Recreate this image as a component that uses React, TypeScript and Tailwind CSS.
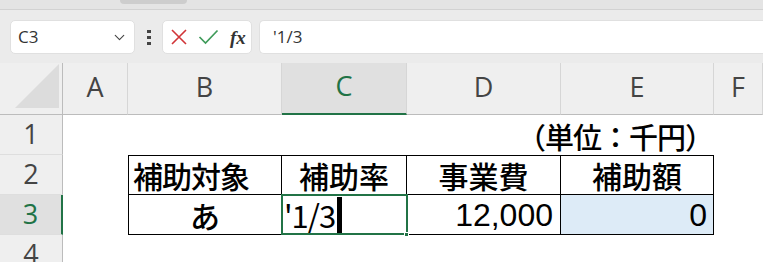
import { ChevronDown } from 'lucide-react'

// Excel-like sheet: formula bar + a small 補助 table, cell C3 in edit mode.

const cols = ['A', 'B', 'C', 'D', 'E', 'F']
const jp = "font-['Noto_Sans_CJK_JP','Noto_Sans_CJK_SC',sans-serif]"
const num = "font-['Liberation_Sans',Arial,sans-serif]"
const head = "font-['Open_Sans',sans-serif]"

function ColHeader({ label }: { label: string }) {
	const active = label === 'C'
	return (
		<div
			className={
				'flex items-center justify-center border-r border-[#d6d6d6] pb-[3px] text-[27px] ' +
				head +
				(active
					? ' border-b-2 border-b-[#217346] bg-[#e0e0e0] text-[#217346]'
					: ' border-b border-b-[#bcbcbc] bg-[#efefef] text-[#444]')
			}
		>
			{label}
		</div>
	)
}

function RowHeader({ n }: { n: number }) {
	const active = n === 3
	return (
		<div
			className={
				'flex items-center justify-center border-b border-b-[#dedede] text-[27px] ' +
				head +
				(active
					? ' border-r-2 border-r-[#217346] bg-[#e0e0e0] text-[#217346]'
					: ' border-r border-r-[#bcbcbc] bg-[#efefef] text-[#444]')
			}
		>
			{n}
		</div>
	)
}

export default function App() {
	return (
		<div className="h-[262px] w-[763px] overflow-hidden bg-white">
			{/* drag strip */}
			<div className="flex h-[10px] border-b border-[#d2d2d2] bg-[#e4e4e4]">
				<div className="ml-[120px] h-[4px] w-[67px] rounded-b-full bg-[#cdcdcd]" />
			</div>

			{/* formula bar */}
			<div className="flex h-[53px] items-start gap-0 bg-[#ebebeb] pt-[10px]">
				<div className="ml-[10px] flex h-[34px] w-[125px] items-center justify-between rounded-[5px] border border-[#e0e0e0] bg-white pl-[7px] pr-[6px]">
					<span className={"text-[17px] text-[#333] " + head}>C3</span>
					<ChevronDown size={17} strokeWidth={1.6} className="text-[#444]" />
				</div>
				<div className="flex h-[34px] w-[27px] flex-col items-center justify-center gap-[3px]">
					<div className="h-[3px] w-[4px] bg-[#444]" />
					<div className="h-[3px] w-[4px] bg-[#444]" />
					<div className="h-[3px] w-[4px] bg-[#444]" />
				</div>
				<div className="flex h-[34px] w-[90px] items-center rounded-[5px] border border-[#e0e0e0] bg-white">
					<svg width="18" height="18" viewBox="0 0 18 18" className="ml-[7px]">
						<path d="M2 2 L16 16 M16 2 L2 16" stroke="#d13438" strokeWidth="1.6" fill="none" />
					</svg>
					<svg width="21" height="16" viewBox="0 0 21 16" className="ml-[10px]">
						<path d="M1.5 8 L7.5 14 L19.5 1.5" stroke="#3f9b5a" strokeWidth="1.7" fill="none" />
					</svg>
					<span className="ml-[11px] font-['Liberation_Serif',serif] text-[19px] font-bold italic leading-none text-[#333]">
						fx
					</span>
				</div>
				<div className="ml-[7px] flex h-[34px] flex-1 items-center rounded-l-[5px] border border-r-0 border-[#e0e0e0] bg-white pl-[13px]">
					<span className={"text-[17px] text-[#333] " + head}>'1/3</span>
				</div>
			</div>

			{/* sheet */}
			<div className="grid grid-cols-[63px_65px_154px_125px_154px_153px_49px] grid-rows-[52px_40px_40px_40px_40px]">
				<div className="relative border-b border-r border-[#bcbcbc] bg-[#efefef]">
					<svg className="absolute bottom-[6px] right-[3px]" width="44" height="44" viewBox="0 0 44 44">
						<path d="M44 0 L44 44 L0 44 Z" fill="#dcdcdc" />
					</svg>
				</div>
				{cols.map((c) => (
					<ColHeader key={c} label={c} />
				))}

				{/* row 1 */}
				<RowHeader n={1} />
				<div className="col-span-6 flex items-end justify-end pb-[4px] pr-[50px]">
					<span className={"text-[29px] font-medium leading-none tracking-[-1px] text-black " + jp}>（単位：千円）</span>
				</div>

				{/* row 2 */}
				<RowHeader n={2} />
				<div />
				<div className={"flex items-center border-x border-y border-black text-[30px] font-medium leading-none text-black " + jp}>
					<span className="ml-[4px] tracking-[-1px]">補助対象</span>
				</div>
				<div className={"flex items-center justify-center border-y border-r border-black text-[30px] font-medium leading-none text-black " + jp}>
					補助率
				</div>
				<div className={"flex items-center justify-center border-y border-r border-black text-[30px] font-medium leading-none text-black " + jp}>
					事業費
				</div>
				<div className={"flex items-center justify-center border-y border-r border-black text-[30px] font-medium leading-none text-black " + jp}>
					補助額
				</div>
				<div />

				{/* row 3 */}
				<RowHeader n={3} />
				<div />
				<div className={"flex items-center justify-center border-x border-b border-black text-[30px] font-medium leading-none text-black " + jp}>
					あ
				</div>
				<div className="relative flex items-center border-b border-black">
					<span className={"ml-[2px] text-[31px] leading-none tracking-[-1px] text-black " + jp}>'1/3</span>
					<div className="ml-[2px] h-[36px] w-[5px] bg-black" />
					<div className="pointer-events-none absolute -left-[1px] -top-[1px] h-[41px] w-[127px] border-2 border-[#217346]" />
					<div className="absolute -bottom-[3px] -right-[2px] size-[5px] border border-white bg-[#217346]" />
				</div>
				<div className={"flex items-center justify-end border-x border-b border-black pr-[7px] text-[32px] leading-none text-black " + num}>
					12,000
				</div>
				<div className={"flex items-center justify-end border-b border-r border-black bg-[#ddebf7] pr-[6px] text-[32px] leading-none text-black " + num}>
					0
				</div>
				<div />

				{/* row 4 */}
				<RowHeader n={4} />
				<div className="col-span-6" />
			</div>
		</div>
	)
}
